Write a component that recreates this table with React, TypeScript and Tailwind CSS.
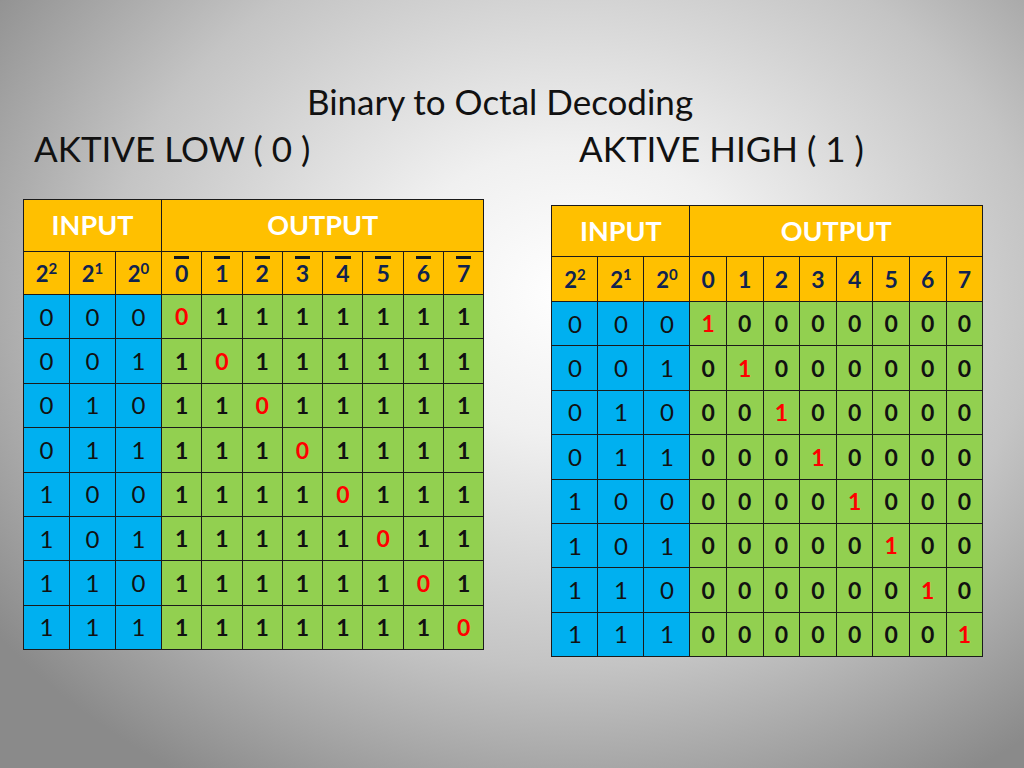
import React from 'react'

type Mode = 'low' | 'high'

const inputs = [0, 1, 2, 3, 4, 5, 6, 7].map((n) => [(n >> 2) & 1, (n >> 1) & 1, n & 1])

function DecoderTable({ mode }: { mode: Mode }) {
  const isLow = mode === 'low'
  const outW = isLow ? 'w-[40.3px]' : 'w-[36.6px]'
  const cell = 'border-[1.5px] border-[#1b1b1b] text-center p-0'

  return (
    <table className="border-collapse table-fixed" style={{ fontFamily: 'Lato, "Open Sans", sans-serif' }}>
      <tbody>
        <tr className={isLow ? 'h-[52px]' : 'h-[51px]'}>
          <th colSpan={3} className={`${cell} bg-[#ffc000] text-white text-[27px] font-bold`}>INPUT</th>
          <th colSpan={8} className={`${cell} bg-[#ffc000] text-white text-[27px] font-bold`}>OUTPUT</th>
        </tr>
        <tr className={isLow ? 'h-[43px]' : 'h-[45px]'}>
          {[2, 1, 0].map((p) => (
            <th key={p} className={`${cell} w-[46px] bg-[#ffc000] text-[#0f2350] text-[22px] font-bold`}>
              2<sup className="text-[15px] font-bold relative -top-[8px]">{p}</sup>
            </th>
          ))}
          {[0, 1, 2, 3, 4, 5, 6, 7].map((d) => (
            <th key={d} className={`${cell} ${outW} bg-[#ffc000] text-[#0f2350] text-[23px] font-bold`}>
              {isLow ? (
                <span className="inline-block border-t-[3px] border-[#101820] leading-none pt-[3px] px-[1px]">{d}</span>
              ) : (
                d
              )}
            </th>
          ))}
        </tr>
        {inputs.map((bits, r) => (
          <tr key={r} className="h-[44.4px]">
            {bits.map((b, i) => (
              <td key={i} className={`${cell} bg-[#00b0f0] text-[#111] text-[24px]`}>{b}</td>
            ))}
            {[0, 1, 2, 3, 4, 5, 6, 7].map((c) => {
              const active = c === r
              const val = isLow ? (active ? 0 : 1) : active ? 1 : 0
              return (
                <td
                  key={c}
                  className={`${cell} bg-[#92d050] text-[23px] font-bold ${active ? 'text-[#ff0000]' : 'text-[#111]'}`}
                >
                  {val}
                </td>
              )
            })}
          </tr>
        ))}
      </tbody>
    </table>
  )
}

export default function App() {
  return (
    <div
      className="w-[1024px] h-[768px] overflow-hidden bg-[radial-gradient(ellipse_70%_75%_at_56%_38%,#ffffff_0%,#f0f0f0_25%,#c4c4c4_65%,#8a8a8a_100%)] text-[#111]"
      style={{ fontFamily: 'Lato, "Open Sans", sans-serif' }}
    >
      <div className="pt-[80px] pr-[24px] text-center text-[35px] leading-[42px] text-[#111]">Binary to Octal Decoding</div>
      <div className="flex text-[35px] leading-[40px] mt-[6px]">
        <div className="pl-[34px] w-[545px]">AKTIVE LOW ( 0 )</div>
        <div className="pl-[34px]">AKTIVE HIGH ( 1 )</div>
      </div>
      <div className="flex items-start">
        <div className="ml-[23px] mt-[31px]">
          <DecoderTable mode="low" />
        </div>
        <div className="ml-[67px] mt-[37px]">
          <DecoderTable mode="high" />
        </div>
      </div>
    </div>
  )
}
